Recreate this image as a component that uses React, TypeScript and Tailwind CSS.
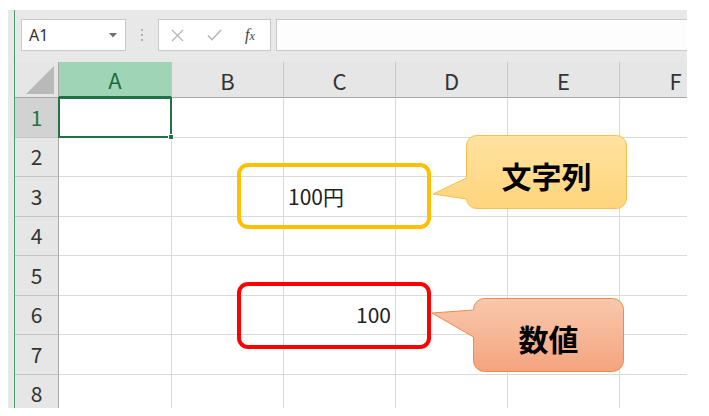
import React from 'react';

const COLS = ['A', 'B', 'C', 'D', 'E', 'F'];
const ROWS = [1, 2, 3, 4, 5, 6, 7, 8];

const jp = { fontFamily: '"Noto Sans CJK JP", "Noto Sans", sans-serif' };

function Cell({ col, row }: { col: string; row: number }) {
  const w = col === 'A' ? 'w-[113px]' : 'w-[112px]';
  let content: React.ReactNode = null;
  if (col === 'C' && row === 3) {
    content = (
      <div className="flex h-full items-end pb-[9px] pl-[4px] text-[21px] leading-none text-[#222]">
        100円
      </div>
    );
  }
  if (col === 'C' && row === 6) {
    content = (
      <div className="flex h-full items-end justify-end pb-[9px] pr-[4px] text-[21px] leading-none text-[#222]">
        100
      </div>
    );
  }
  return (
    <div className={`relative h-full shrink-0 border-b border-r border-[#dadada] bg-white ${w}`}>
      {content}
      {col === 'A' && row === 1 && (
        <div className="absolute -left-[1px] -top-[1px] z-10 h-[41px] w-[114px] border-2 border-[#217346]">
          <div className="absolute -bottom-[4px] -right-[4px] h-[6px] w-[6px] border border-white bg-[#217346]" />
        </div>
      )}
    </div>
  );
}

function Toolbar() {
  return (
    <div className="flex h-[52px] shrink-0 items-start bg-[#e8e8e8] pl-[6px] pt-[9px]">
      <div className="flex h-[32px] w-[105px] shrink-0 items-center justify-between border border-[#c8c8c8] bg-white pl-[7px] pr-[8px]">
        <span className="text-[16px] text-[#333]" style={{ fontFamily: '"Noto Sans", sans-serif' }}>
          A1
        </span>
        <svg width="8" height="5" viewBox="0 0 8 5">
          <path d="M0 0 H8 L4 4.5 Z" fill="#707070" />
        </svg>
      </div>
      <div className="flex h-[32px] w-[32px] shrink-0 flex-col items-center justify-center gap-[3px]">
        <span className="h-[2px] w-[2px] bg-[#b0b0b0]" />
        <span className="h-[2px] w-[2px] bg-[#b0b0b0]" />
        <span className="h-[2px] w-[2px] bg-[#b0b0b0]" />
      </div>
      <div className="flex h-[32px] w-[113px] shrink-0 items-center border border-[#c8c8c8] bg-white">
        <svg className="ml-[12px]" width="13" height="13" viewBox="0 0 13 13">
          <path d="M1 1 L12 12 M12 1 L1 12" stroke="#b8b8b8" strokeWidth="1.4" fill="none" />
        </svg>
        <svg className="ml-[23px]" width="15" height="12" viewBox="0 0 15 12">
          <path d="M1 6.5 L5 10.5 L14 1" stroke="#b8b8b8" strokeWidth="1.6" fill="none" />
        </svg>
        <span
          className="ml-[23px] italic text-[16px] leading-none text-[#444]"
          style={{ fontFamily: '"Liberation Serif", serif' }}
        >
          f<span className="text-[12px]">x</span>
        </span>
      </div>
      <div className="ml-[5px] h-[32px] flex-1 border-y border-l border-[#c8c8c8] bg-[#fdfdfd]" />
    </div>
  );
}

function Bubbles() {
  return (
    <svg className="pointer-events-none absolute left-0 top-0 z-20" width="709" height="416">
      <defs>
        <linearGradient id="yel" x1="0" y1="0" x2="0" y2="1">
          <stop offset="0" stopColor="#ffe3a0" />
          <stop offset="1" stopColor="#ffd47c" />
        </linearGradient>
        <linearGradient id="org" x1="0" y1="0" x2="0" y2="1">
          <stop offset="0" stopColor="#f9c8ad" />
          <stop offset="1" stopColor="#f4a47e" />
        </linearGradient>
      </defs>
      <path
        d="M476.5,135.5 H616.5 A10,10 0 0 1 626.5,145.5 V198.5 A10,10 0 0 1 616.5,208.5 H476.5 A10,10 0 0 1 466.5,198.5 V199 L433,194 L466.5,178 V145.5 A10,10 0 0 1 476.5,135.5 Z"
        fill="url(#yel)"
        stroke="#f3c04c"
        strokeWidth="1"
      />
      <path
        d="M484.5,298.5 H612.5 A11,11 0 0 1 623.5,309.5 V360.5 A11,11 0 0 1 612.5,371.5 H484.5 A11,11 0 0 1 473.5,360.5 V337 L432,313 L473.5,310 V309.5 A11,11 0 0 1 484.5,298.5 Z"
        fill="url(#org)"
        stroke="#ee8a4e"
        strokeWidth="1"
      />
    </svg>
  );
}

export default function App() {
  return (
    <div className="relative h-[416px] w-[709px] overflow-hidden bg-white pl-[8px] pt-[10px]" style={jp}>
      <div className="flex h-[398px] w-[679px] overflow-hidden">
        <div className="w-[6px] shrink-0 bg-[#e8e8e8]" />
        <div className="w-[1px] shrink-0 bg-[#4e9e6d]" />
        <div className="flex min-w-0 flex-1 flex-col overflow-hidden">
          <Toolbar />
          {/* column headers */}
          <div className="flex h-[36px] shrink-0 bg-[#e6e6e6]">
            <div className="relative w-[44px] shrink-0 border-b border-r border-[#a8a8a8]">
              <svg className="absolute bottom-[3px] right-[4px]" width="28" height="28" viewBox="0 0 28 28">
                <path d="M28 0 V28 H0 Z" fill="#b9b9b9" />
              </svg>
            </div>
            {COLS.map((c) => (
              <div
                key={c}
                className={`flex shrink-0 items-center justify-center text-[22px] leading-none ${
                  c === 'A'
                    ? 'w-[113px] border-b-2 border-r border-b-[#217346] border-r-[#c6c6c6] bg-[#9fd5b6] text-[#1d6b40]'
                    : 'w-[112px] border-b border-r border-b-[#a8a8a8] border-r-[#c6c6c6] text-[#333]'
                }`}
              >
                {c}
              </div>
            ))}
          </div>
          {ROWS.map((r) => (
            <div key={r} className="flex h-[39.5px] shrink-0">
              <div
                className={`flex w-[44px] shrink-0 items-center justify-center border-b border-r text-[21px] leading-none ${
                  r === 1
                    ? 'border-b-[#c4c4c4] border-r-[#217346] bg-[#d2d2d2] text-[#217346]'
                    : 'border-b-[#c4c4c4] border-r-[#a8a8a8] bg-[#e6e6e6] text-[#333]'
                }`}
              >
                {r}
              </div>
              {COLS.map((c) => (
                <Cell key={c} col={c} row={r} />
              ))}
            </div>
          ))}
        </div>
      </div>

      {/* highlight frames around C3 and C6 */}
      <div className="absolute left-[237px] top-[163px] z-20 h-[66px] w-[194px] rounded-[11px] border-4 border-[#ffc000]" />
      <div className="absolute left-[237px] top-[282px] z-20 h-[67px] w-[194px] rounded-[11px] border-4 border-[#ff0000]" />

      <Bubbles />
      <div className="absolute left-[466px] top-[135px] z-30 flex h-[74px] w-[161px] items-center justify-center pt-[6px] text-[30px] font-bold leading-none text-black">
        文字列
      </div>
      <div className="absolute left-[473px] top-[298px] z-30 flex h-[74px] w-[151px] items-center justify-center pt-[5px] text-[30px] font-bold leading-none text-black">
        数値
      </div>
    </div>
  );
}
